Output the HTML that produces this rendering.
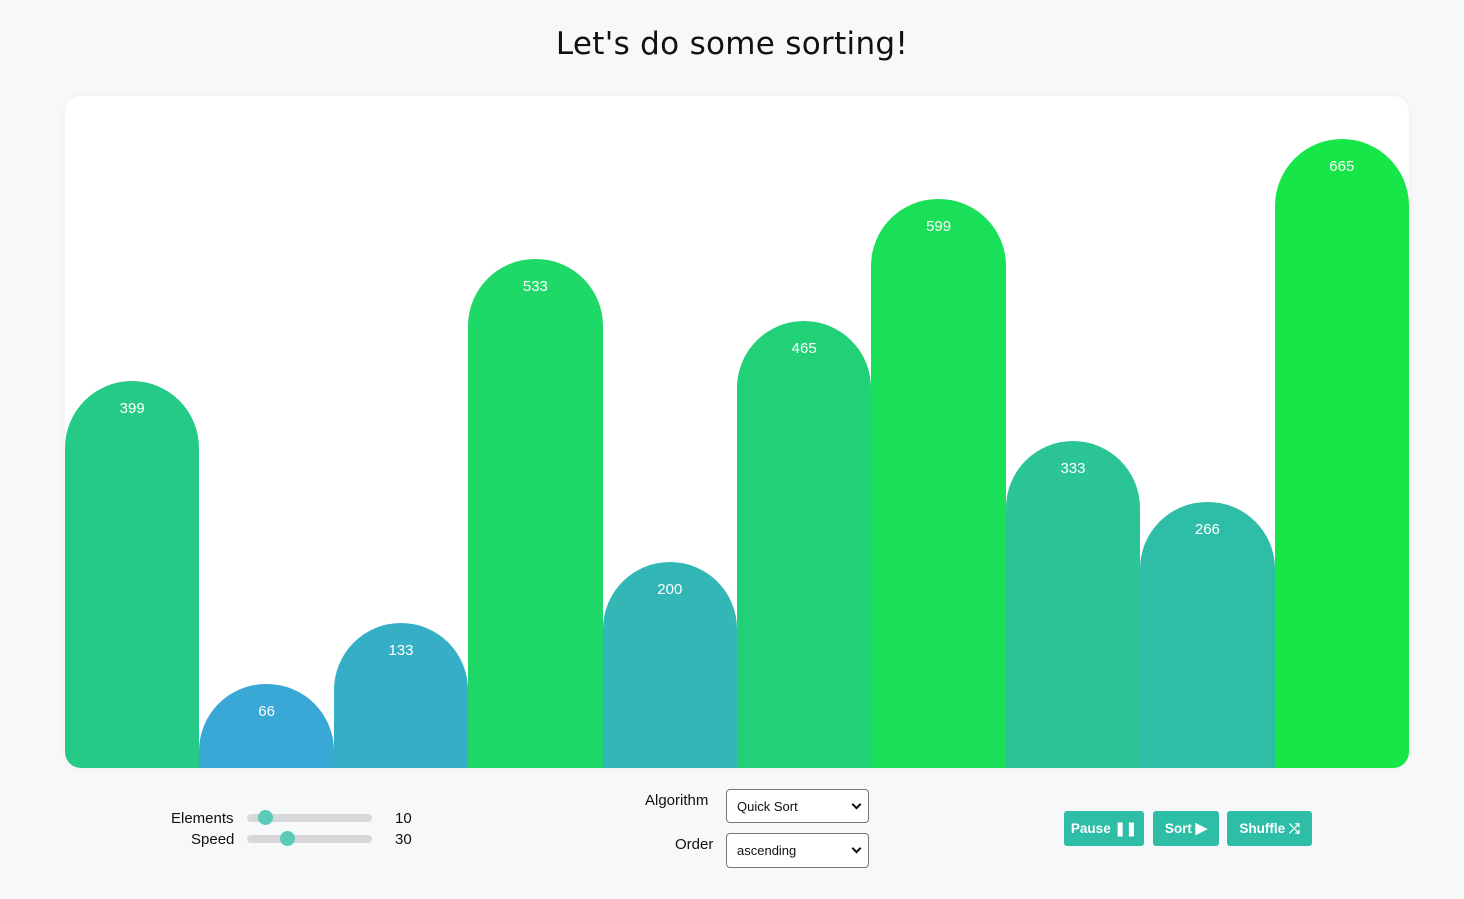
<!DOCTYPE html>
<html><head><style>
body{margin:0;background:#f7f8fa;width:1464px;height:899px;overflow:hidden;font-family:"Segoe UI","Liberation Sans",sans-serif;}
h1{position:absolute;top:26px;left:0;width:1464px;text-align:center;margin:0;font-weight:400;font-size:31px;color:#111;font-family:"DejaVu Sans","Liberation Sans",sans-serif;letter-spacing:0.3px}
#box{position:absolute;left:65px;top:96px;width:1344px;height:672px;background:#fff;border-radius:16px;overflow:hidden;box-shadow:0 0 8px rgba(0,0,0,0.04)}
.bar{position:absolute;bottom:0;width:134.4px;border-radius:67px 67px 0 0;color:#fff;font-size:15px;text-align:center;box-sizing:border-box;padding-top:19px}
.lbl{position:absolute;font-size:15px;color:#111}
.track{position:absolute;width:125px;height:8px;background:#d6d8d9;border-radius:4px}
.knob{position:absolute;width:15px;height:15px;border-radius:50%;background:#5bcab8;top:-4px}
.sel{position:absolute;width:143px;height:34px;border:1px solid #767676;border-radius:4px;background:#fff;font-size:13px;box-sizing:border-box;padding:9px 0 0 10px;color:#111}
.sel:after{content:"";position:absolute;right:8px;top:11px;width:5px;height:5px;border-right:2px solid #111;border-bottom:2px solid #111;transform:rotate(45deg)}
.btn{position:absolute;top:811px;height:35px;background:#2ebda5;border-radius:3px;color:#fff;font-size:13.5px;font-weight:bold;font-family:"Liberation Sans",sans-serif;line-height:35px;text-align:center}
</style></head><body>
<h1>Let's do some sorting!</h1>
<div id="box"></div>
<div class="lbl" style="left:171px;top:810px">Elements</div>
<div class="lbl" style="left:191px;top:831px">Speed</div>
<div class="track" style="left:247px;top:814px"><div class="knob" style="left:11px"></div></div>
<div class="track" style="left:247px;top:835px"><div class="knob" style="left:33px"></div></div>
<div class="lbl" style="left:395px;top:810px">10</div>
<div class="lbl" style="left:395px;top:831px">30</div>
<div class="lbl" style="left:645px;top:792px">Algorithm</div>
<div class="lbl" style="left:675px;top:836px">Order</div>
<div class="sel" style="left:726px;top:789px">Quick Sort</div>
<div class="sel" style="left:726px;top:833px;height:35px">ascending</div>
<div class="btn" style="left:1064px;width:80px">Pause &#10074;&#10074;</div>
<div class="btn" style="left:1153px;width:66px">Sort <span style="font-size:15px">&#9654;</span></div>
<div class="btn" style="left:1227px;width:85px">Shuffle &#10542;</div>
<script>
var v=[399,66,133,533,200,465,599,333,266,665],b=document.getElementById('box');
v.forEach(function(x,i){var t=(x-66)/599,d=document.createElement('div');d.className='bar';
var r=Math.round(58-36*t),g=Math.round(168+62*t),bl=Math.round(214-142*t);
d.style.background='rgb('+r+','+g+','+bl+')';d.style.left=(i*134.4)+'px';d.style.height=Math.round(0.91*x+24)+'px';d.textContent=x;b.appendChild(d);});
</script>
</body></html>
